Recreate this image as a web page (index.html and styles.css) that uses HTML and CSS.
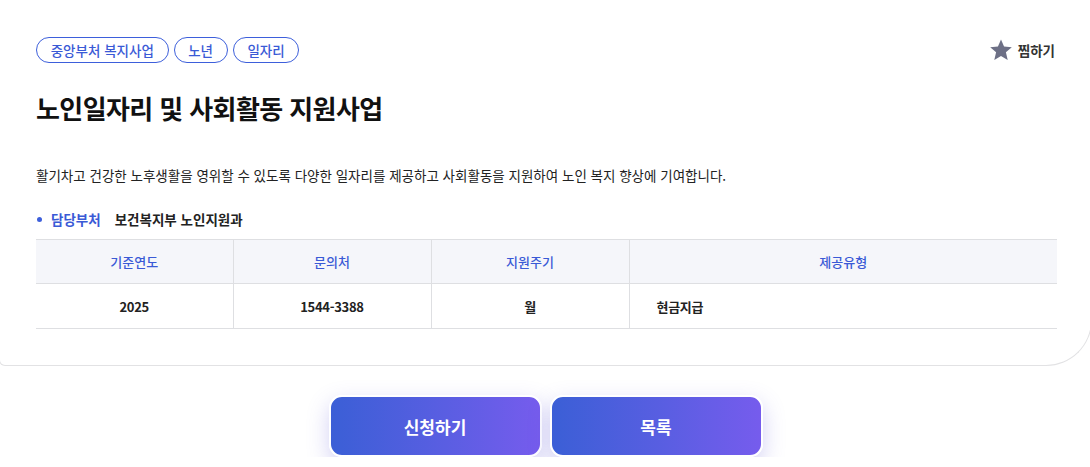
FILE: index.html
```html
<!DOCTYPE html>
<html lang="ko">
<head>
<meta charset="utf-8">
<title>노인일자리 및 사회활동 지원사업</title>
<link rel="stylesheet" href="styles.css">
</head>
<body>
<main class="page">
  <section class="card">
    <div class="top-row">
      <div class="tags">
        <span class="tag">중앙부처 복지사업</span>
        <span class="tag">노년</span>
        <span class="tag">일자리</span>
      </div>
      <button class="fav" type="button">
        <svg class="star" viewBox="0 0 24 24" width="24" height="24" aria-hidden="true"><path d="M12 1.4l3.05 7.2 7.75.65-5.9 5.1 1.8 7.6L12 17.9l-6.7 4.05 1.8-7.6-5.9-5.1 7.75-.65z" fill="#6d7086"/></svg>
        <span>찜하기</span>
      </button>
    </div>
    <h1 class="title">노인일자리 및 사회활동 지원사업</h1>
    <p class="desc">활기차고 건강한 노후생활을 영위할 수 있도록 다양한 일자리를 제공하고 사회활동을 지원하여 노인 복지 향상에 기여합니다.</p>
    <div class="dept">
      <span class="dot"></span>
      <span class="dept-label">담당부처</span>
      <span class="dept-value">보건복지부 노인지원과</span>
    </div>
    <table class="info">
      <thead>
        <tr><th>기준연도</th><th>문의처</th><th>지원주기</th><th>제공유형</th></tr>
      </thead>
      <tbody>
        <tr><td>2025</td><td>1544-3388</td><td>월</td><td class="left">현금지급</td></tr>
      </tbody>
    </table>
  </section>
  <div class="actions">
    <button class="btn" type="button">신청하기</button>
    <button class="btn" type="button">목록</button>
  </div>
</main>
</body>
</html>
```

FILE: styles.css
```css
* { box-sizing: border-box; }
html, body { margin: 0; padding: 0; background: #fff; }
body {
  font-family: "Noto Sans CJK KR", "Noto Sans", sans-serif;
  color: #222;
  overflow: hidden;
}
.page { width: 1090px; }
.card {
  margin: 0 -2px 0 -1px;
  padding: 37px 34px 36px 36px;
  background: #fff;
  border: 1px solid #e2e2e4;
  border-top: 0;
  border-radius: 0 0 46px 6px;
}
.top-row {
  display: flex;
  justify-content: space-between;
  align-items: center;
}
.tags { display: flex; gap: 5px; }
.tag {
  height: 26px;
  line-height: 24px;
  padding: 0 13.7px;
  border: 1px solid #3d5fdb;
  border-radius: 13px;
  color: #3a5ad6;
  font-size: 13.5px;
  font-weight: 500;
}
.fav {
  display: flex;
  align-items: center;
  gap: 5px;
  border: 0;
  background: none;
  padding: 0;
  margin-right: 2px;
  font-family: inherit;
  font-size: 13.5px;
  font-weight: 700;
  color: #333;
}
.title {
  margin: 28px 0 0;
  font-size: 26px;
  line-height: 34px;
  font-weight: 700;
  color: #111;
  letter-spacing: -0.6px;
}
.desc {
  margin: 40px 0 0;
  font-size: 13.5px;
  line-height: 20px;
  color: #222;
}
.dept {
  margin-top: 24px;
  display: flex;
  align-items: center;
  font-size: 13.5px;
  line-height: 20px;
  font-weight: 700;
}
.dot {
  width: 5px;
  height: 5px;
  border-radius: 50%;
  background: #3d5fdb;
  margin: 0 9px 0 1px;
}
.dept-label { color: #3a5ad6; margin-right: 14px; }
.dept-value { color: #222; }
.info {
  margin-top: 10px;
  width: 1021px;
  border-collapse: collapse;
  table-layout: fixed;
  font-size: 13px;
}
.info th, .info td {
  border-top: 1px solid #dedfe2;
  border-bottom: 1px solid #dedfe2;
  border-left: 1px solid #dedfe2;
  text-align: center;
}
.info th:first-child, .info td:first-child { border-left: 0; }
.info th:nth-child(1) { width: 197px; }
.info th:nth-child(2) { width: 198px; }
.info th:nth-child(3) { width: 198px; }
.info th {
  height: 44px;
  background: #f5f6fa;
  color: #3a5ad6;
  font-weight: 500;
}
.info td {
  height: 45px;
  color: #222;
  font-weight: 600;
  letter-spacing: -0.3px;
}
.info td.left { text-align: left; padding-left: 27px; }
.actions {
  display: flex;
  justify-content: center;
  gap: 8px;
  margin-top: 29px;
  padding-left: 1px;
}
.btn {
  width: 213px;
  height: 62px;
  border: 2px solid #fff;
  border-radius: 13px;
  background: linear-gradient(90deg, #3b5fd6 0%, #5a5ee2 55%, #765ced 100%);
  box-shadow: 0 8px 22px rgba(98, 90, 215, 0.28);
  color: #fff;
  font-family: inherit;
  font-size: 17px;
  font-weight: 700;
}
```
